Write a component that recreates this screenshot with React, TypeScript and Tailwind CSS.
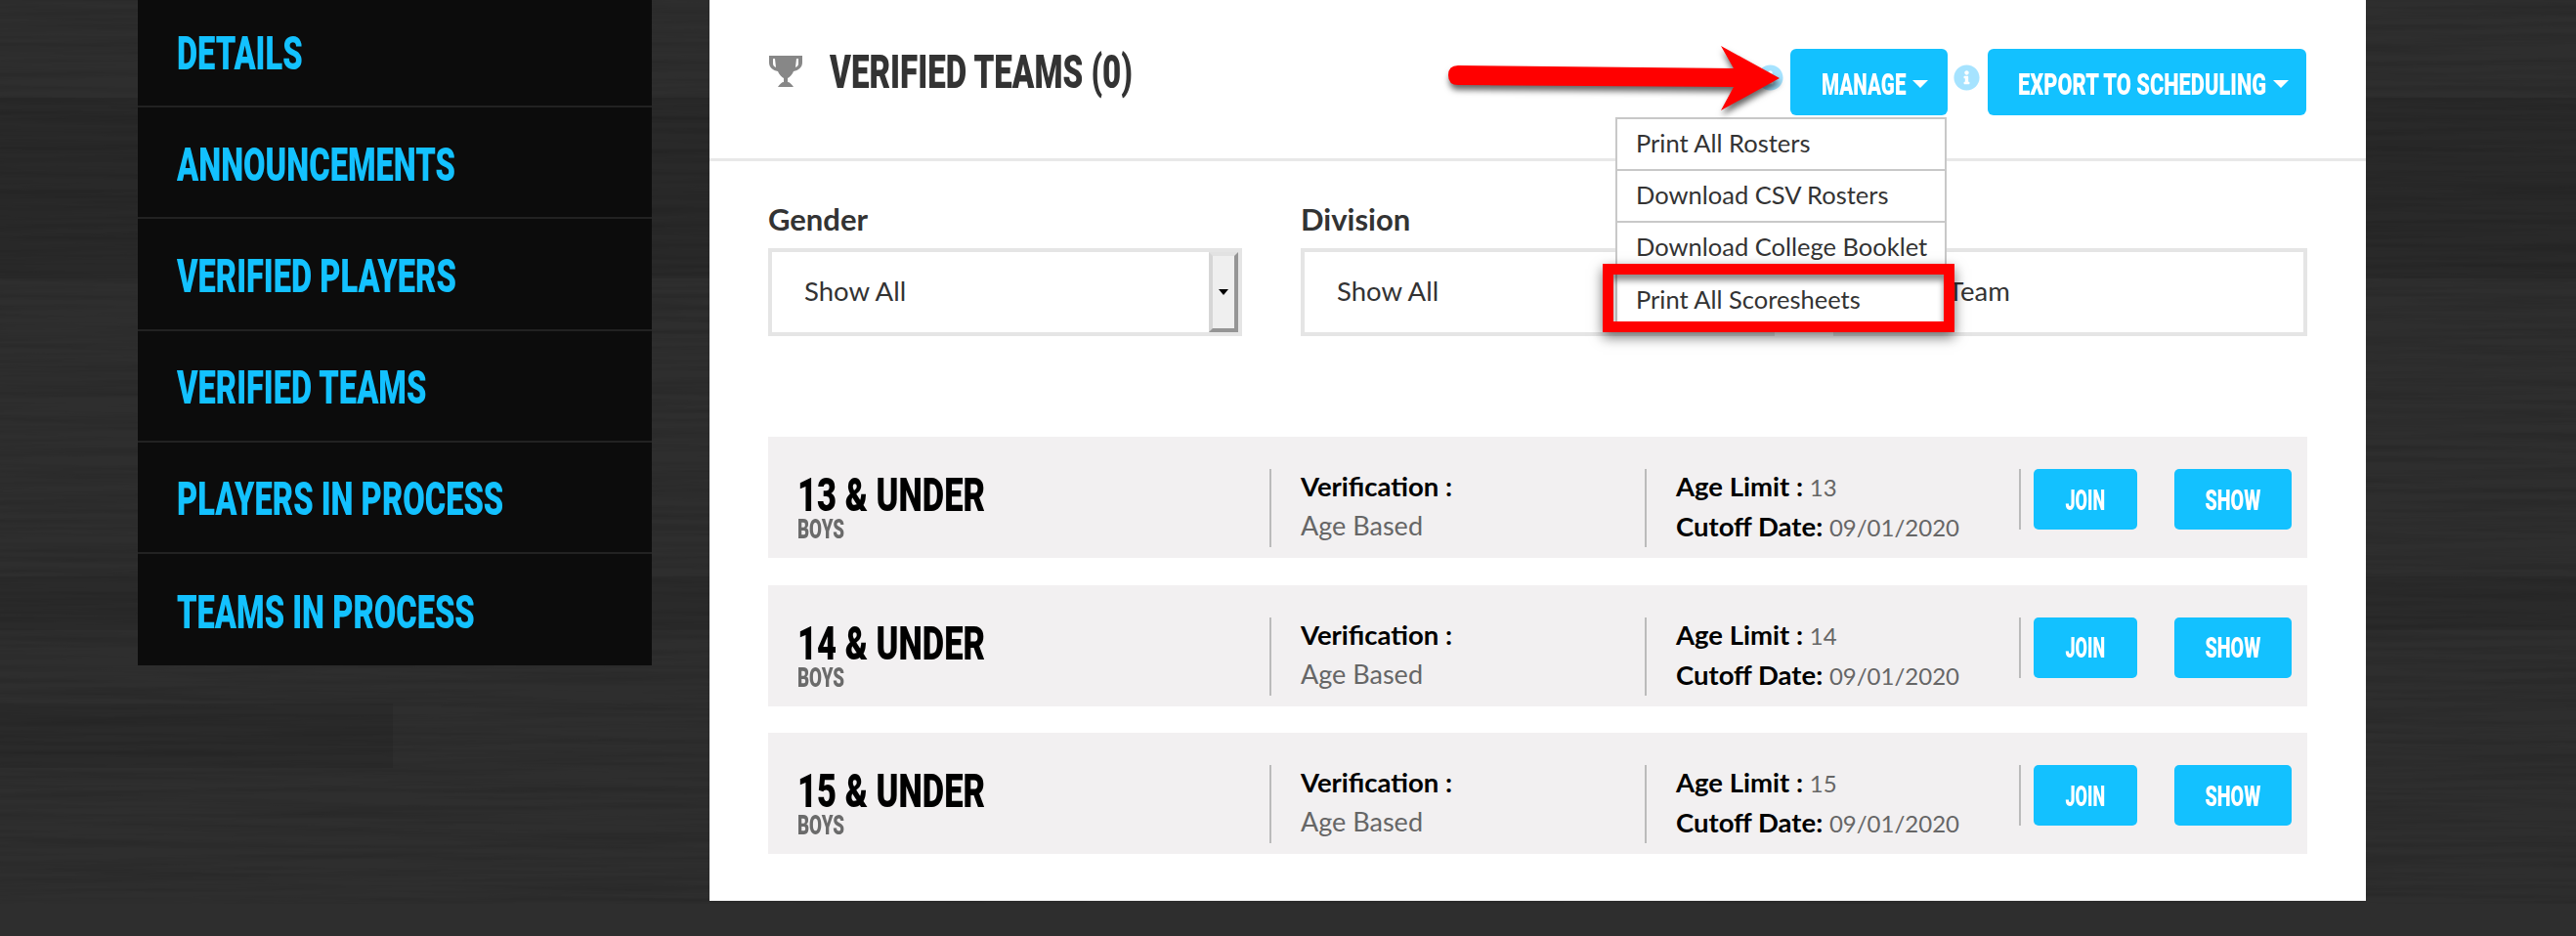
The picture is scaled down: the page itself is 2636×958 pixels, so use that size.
import { ReactNode } from "react";
import { FaInfoCircle } from "react-icons/fa";

const NAV_ITEMS = [
  "DETAILS",
  "ANNOUNCEMENTS",
  "VERIFIED PLAYERS",
  "VERIFIED TEAMS",
  "PLAYERS IN PROCESS",
  "TEAMS IN PROCESS",
];

const DIVISIONS = [
  { title: "13 & UNDER", age: 13 },
  { title: "14 & UNDER", age: 14 },
  { title: "15 & UNDER", age: 15 },
];

const MENU_ITEMS = [
  "Print All Rosters",
  "Download CSV Rosters",
  "Download College Booklet",
  "Print All Scoresheets",
];

// no condensed face is installed, so squeeze Roboto Black
const Cond = ({ children, className = "" }: { children: ReactNode; className?: string }) => (
  <span className={`block whitespace-nowrap font-black [font-family:Roboto,sans-serif] ${className}`}>
    {children}
  </span>
);

const Caret = () => (
  <span className="h-0 w-0 border-x-[8px] border-t-[8px] border-x-transparent border-t-white" />
);

const Background = () => (
  <svg className="absolute inset-0 h-full w-full" aria-hidden="true">
    <filter id="grain" x="0" y="0" width="100%" height="100%">
      <feTurbulence type="fractalNoise" baseFrequency="0.004 0.16" numOctaves="4" seed="7" />
      <feColorMatrix values="0 0 0 0 0  0 0 0 0 0  0 0 0 0 0  1.6 0 0 0 -0.62" />
    </filter>
    <rect width="2636" height="958" fill="#2e2e2e" />
    <rect x="0" y="100" width="2636" height="185" fill="#292929" />
    <rect x="0" y="590" width="2636" height="55" fill="#2a2a2a" />
    <rect x="0" y="720" width="402" height="66" fill="#2a2a2a" />
    <rect width="2636" height="925" filter="url(#grain)" opacity="0.14" />
  </svg>
);

const Trophy = () => (
  <svg width="34" height="32" viewBox="0 0 34 32" className="mr-[28px] mt-[-2px] shrink-0">
    <path
      fill="#878787"
      fillRule="evenodd"
      d="M0 0H34V7C34 12 30 15 25 16C24 19 21 22 19 23V27C21 27 23 29 25 32H9C11 29 13 27 15 27V23C13 22 10 19 9 16C4 15 0 12 0 7ZM4 3V8C4 10 5 11 7 12L6 3ZM30 3H28L27 12C29 11 30 10 30 8Z"
    />
  </svg>
);

const Arrow = () => (
  <svg
    width="340"
    height="66"
    viewBox="0 0 340 66"
    className="absolute left-[756px] top-[47px] overflow-visible drop-shadow-[1px_5px_3px_rgba(0,0,0,0.6)]"
  >
    <path fill="#ff0000" d="M10 20L292 23L279 0L339 33L279 66L292 42L10 40Q0 40 0 30Q0 20 10 20Z" />
  </svg>
);

const Dropdown = () => (
  <div className="absolute left-[927px] top-[120px] w-[339px] border-2 border-[#c8c8c8] bg-white text-[25.5px] text-[#333]">
    {MENU_ITEMS.map((item) => (
      <div key={item} className="flex h-[53px] items-center border-b-2 border-[#c8c8c8] pb-[2px] pl-[19px] last:border-b-0">
        {item}
      </div>
    ))}
  </div>
);

const Filter = ({
  label,
  text,
  scroll,
  textClass = "pl-[33px]",
}: {
  label?: string;
  text: string;
  scroll?: boolean;
  textClass?: string;
}) => (
  <div>
    <div className="h-[43px] text-[31px] font-bold leading-[26px] text-[#333]">{label}</div>
    <div className="flex h-[90px] items-center justify-between border-4 border-[#e5e5e5] bg-white text-[27.5px] text-[#333]">
      <span className={`pb-[3px] ${textClass}`}>{text}</span>
      {scroll && (
        <span className="flex h-full w-[30px] items-center justify-center border-4 border-b-[#959595] border-l-[#d6d6d6] border-r-[#959595] border-t-[#e2e2e2] bg-[#efefef]">
          <svg width="10" height="6" viewBox="0 0 10 6">
            <path d="M0 0H10L5 6Z" fill="#000" />
          </svg>
        </span>
      )}
    </div>
  </div>
);

const DivisionRow = ({ title, age }: { title: string; age: number }) => (
  <div className="flex h-[124px] items-start bg-[#f2f0f1] pl-[30px]">
    <div className="mt-[38px] w-[483px]">
      <Cond className="h-[44px] origin-left scale-x-[0.72] text-[48px] leading-[44px] text-black">{title}</Cond>
      <Cond className="mt-[2px] origin-left scale-x-[0.67] text-[28px] leading-[22px] text-[#6b6b6b]">BOYS</Cond>
    </div>
    <div className="mt-[33px] flex h-[80px] w-[384px] flex-col gap-[4px] border-l-2 border-[#bbb] pl-[30px] leading-[36px]">
      <div className="text-[27.5px] font-bold text-black">Verification :</div>
      <div className="text-[27px] text-[#666]">Age Based</div>
    </div>
    <div className="mt-[33px] flex h-[80px] w-[383px] flex-col gap-[4px] border-l-2 border-[#bbb] pl-[30px] text-[24px] leading-[36px] text-[#666]">
      <div>
        <b className="text-[27.5px] text-black">Age Limit : </b>
        {age}
      </div>
      <div>
        <b className="text-[27.5px] text-black">Cutoff Date: </b>
        09/01/2020
      </div>
    </div>
    <div className="mt-[33px] flex h-[62px] items-center border-l-2 border-[#bbb] pl-[13px]">
      <button className="flex h-[62px] w-[106px] items-center justify-center rounded-[5px] bg-[#13c1ff] pt-[2px]">
        <Cond className="scale-x-[0.62] text-[29px] leading-none text-white">JOIN</Cond>
      </button>
      <button className="ml-[38px] flex h-[62px] w-[120px] items-center justify-center rounded-[5px] bg-[#13c1ff] pt-[2px]">
        <Cond className="scale-x-[0.68] text-[29px] leading-none text-white">SHOW</Cond>
      </button>
    </div>
  </div>
);

export default function App() {
  return (
    <div className="relative h-[958px] w-[2636px] overflow-hidden [font-family:Lato,sans-serif]">
      <Background />
      <div className="relative flex items-start pl-[141px]">
        <nav className="-mt-[4px] w-[526px] bg-[#0c0c0c]">
          {NAV_ITEMS.map((item) => (
            <div key={item} className="flex h-[114.2px] items-center border-b-2 border-[#222] pl-[40px] pt-[5px] last:border-b-0">
              <Cond className="origin-left scale-x-[0.68] text-[48px] leading-none text-[#13c1ff]">{item}</Cond>
            </div>
          ))}
        </nav>
        <main className="relative ml-[59px] h-[922px] w-[1695px] bg-white">
          <header className="flex h-[165px] items-start justify-between border-b-[3px] border-[#e8e8e8] px-[61px]">
            <div className="flex items-center pt-[50px]">
              <Trophy />
              <Cond className="origin-left scale-x-[0.69] text-[48px] leading-none text-[#333]">VERIFIED TEAMS (0)</Cond>
            </div>
            <div className="flex items-start pt-[50px]">
              <FaInfoCircle className="mt-[16px] text-[27px] text-[#a6e3ff]" />
              <button className="ml-[7px] flex h-[68px] w-[161px] items-center rounded-[6px] bg-[#13c1ff] pl-[32px] pt-[3px]">
                <Cond className="w-[93px] origin-left scale-x-[0.645] text-left text-[32px] leading-none text-white">MANAGE</Cond>
                <Caret />
              </button>
              <FaInfoCircle className="ml-[6px] mt-[16px] text-[27px] text-[#a6e3ff]" />
              <button className="ml-[8px] flex h-[68px] w-[326px] items-center rounded-[6px] bg-[#13c1ff] pl-[31px] pt-[3px]">
                <Cond className="w-[261px] origin-left scale-x-[0.683] text-left text-[32px] leading-none text-white">EXPORT TO SCHEDULING</Cond>
                <Caret />
              </button>
            </div>
          </header>
          <section className="px-[60px] pt-[46px]">
            <div className="grid grid-cols-3 gap-[60px]">
              <Filter label="Gender" text="Show All" scroll />
              <Filter label="Division" text="Show All" />
              <Filter text="Search Team" textClass="pl-[26px]" />
            </div>
            <div className="mt-[103px] flex flex-col gap-[27.5px]">
              {DIVISIONS.map((row) => (
                <DivisionRow key={row.title} title={row.title} age={row.age} />
              ))}
            </div>
          </section>
          <Dropdown />
          <Arrow />
          <div className="absolute left-[914px] top-[270px] h-[70px] w-[360px] border-[11px] border-[#ff0000] shadow-[0_5px_12px_rgba(0,0,0,0.55),inset_0_6px_6px_rgba(0,0,0,0.45)]" />
        </main>
      </div>
    </div>
  );
}
